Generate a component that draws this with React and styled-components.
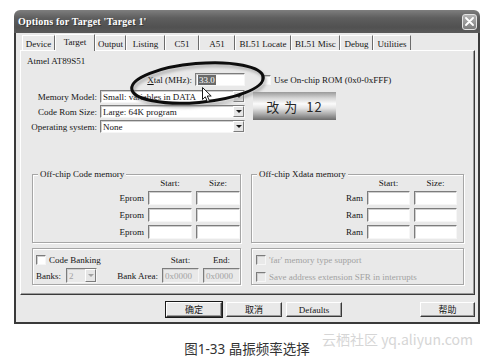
import React from "react";
import styled, { createGlobalStyle } from "styled-components";

const GlobalStyle = createGlobalStyle`
  *, *::before, *::after {
    box-sizing: border-box;
  }
  html, body {
    margin: 0;
    padding: 0;
    background: #ffffff;
  }
  body {
    font-family: "Liberation Serif", "Noto Sans CJK SC", serif;
    font-size: 9px;
    color: #141414;
  }
`;

const Page = styled.div`
  width: 494px;
  height: 362px;
  overflow: hidden;
  display: flex;
  flex-direction: column;
  background: #ffffff;
`;

const Window = styled.div`
  margin: 10px 0 0 14px;
  width: 466px;
  height: 314px;
  flex: none;
  display: flex;
  flex-direction: column;
`;

const TitleBar = styled.div`
  height: 23px;
  flex: none;
  display: flex;
  align-items: center;
  justify-content: space-between;
  padding: 0 3px 0 4px;
  border-radius: 6px 6px 0 0;
  background: linear-gradient(#7e7e7e, #5e5e5e 35%, #515151 75%, #5a5a5a);
  color: #ffffff;
`;

const Title = styled.span`
  font-weight: bold;
  font-size: 10px;
  letter-spacing: 0.2px;
  text-shadow: 1px 1px 0 rgba(0, 0, 0, 0.35);
`;

const CloseButton = styled.div`
  width: 15px;
  height: 16px;
  border: 1px solid #e2e2e2;
  border-radius: 3px;
  background: linear-gradient(#b4b4b4, #7c7c7c);
  display: flex;
  align-items: center;
  justify-content: center;
`;

const Frame = styled.div`
  flex: 1;
  display: flex;
  flex-direction: column;
  border: 2px solid #3a3a3a;
  border-top: none;
  background: #e9e9e9;
  padding: 2px 3px 0 4px;
`;

const TabRow = styled.div`
  height: 15px;
  flex: none;
  display: flex;
  align-items: flex-end;
  padding-left: 2px;
  position: relative;
  z-index: 1;
`;

const Tab = styled.div`
  width: ${(p) => p.$w}px;
  height: ${(p) => (p.$active ? 17 : 15)}px;
  margin-bottom: ${(p) => (p.$active ? -1 : 0)}px;
  padding: ${(p) => (p.$active ? "0 0 2px" : "1px 0 0")};
  display: flex;
  align-items: center;
  justify-content: center;
  white-space: nowrap;
  background: #e9e9e9;
  border-top: 1px solid #ffffff;
  border-left: 1px solid #ffffff;
  border-right: 1px solid #6c6c6c;
`;

const Panel = styled.div`
  position: relative;
  height: 245px;
  flex: none;
  display: flex;
  flex-direction: column;
  padding-left: 6px;
  border: 1px solid;
  border-color: #ffffff #3a3a3a #3a3a3a #ffffff;
  box-shadow: inset -1px -1px 0 #9c9c9c;
`;

const DeviceName = styled.div`
  margin-top: 5px;
  line-height: 11px;
`;

const Row = styled.div`
  height: 13px;
  display: flex;
  align-items: center;
  margin-top: ${(p) => p.$mt || 0}px;
`;

const FieldStack = styled.div`
  display: flex;
  flex-direction: column;
  gap: 2px;
  margin-top: 4px;
`;

const FieldLabel = styled.span`
  width: ${(p) => p.$w}px;
  flex: none;
  text-align: right;
  padding-right: 3px;
  white-space: nowrap;
`;

const sunken = `
  border: 1px solid;
  border-color: #7c7c7c #f6f6f6 #f6f6f6 #7c7c7c;
  box-shadow: inset 1px 1px 0 #cfcfcf;
`;

const TextBox = styled.div`
  width: ${(p) => (p.$w ? `${p.$w}px` : "auto")};
  height: ${(p) => p.$h || 14}px;
  display: flex;
  align-items: center;
  padding-left: 2px;
  white-space: nowrap;
  background: ${(p) => (p.$disabled ? "#e9e9e9" : "#ffffff")};
  color: ${(p) => (p.$disabled ? "#a2a2a2" : "#141414")};
  ${sunken}
`;

const Selected = styled.span`
  background: #6a6a6a;
  color: #ffffff;
  padding: 0 1px;
  line-height: 10px;
`;

const Select = styled.div`
  width: ${(p) => p.$w}px;
  height: ${(p) => p.$h || 13}px;
  display: flex;
  align-items: stretch;
  padding-left: 2px;
  background: ${(p) => (p.$disabled ? "#e9e9e9" : "#ffffff")};
  color: ${(p) => (p.$disabled ? "#a2a2a2" : "#141414")};
  ${sunken}
`;

const SelectText = styled.span`
  flex: 1;
  display: flex;
  align-items: center;
  overflow: hidden;
  white-space: nowrap;
`;

const DropButton = styled.span`
  width: 11px;
  flex: none;
  display: flex;
  align-items: center;
  justify-content: center;
  background: #e6e6e6;
  border: 1px solid;
  border-color: #ffffff #7c7c7c #7c7c7c #ffffff;
  &::after {
    content: "";
    border-left: 3px solid transparent;
    border-right: 3px solid transparent;
    border-top: 3px solid ${(p) => (p.$disabled ? "#a2a2a2" : "#1a1a1a")};
  }
`;

const CheckItem = styled.label`
  display: flex;
  align-items: center;
  gap: 3px;
  height: ${(p) => p.$h || 12}px;
  white-space: nowrap;
  margin-left: ${(p) => p.$ml || 0}px;
  color: ${(p) => (p.$disabled ? "#a2a2a2" : "#141414")};
`;

const Box = styled.span`
  width: 10px;
  height: 10px;
  flex: none;
  background: ${(p) => (p.$disabled ? "#e9e9e9" : "#ffffff")};
  ${sunken}
`;

const GroupGrid = styled.div`
  display: grid;
  grid-template-columns: 209px 213px;
  column-gap: 10px;
  margin-left: 5px;
  margin-top: ${(p) => p.$mt}px;
`;

const Group = styled.div`
  position: relative;
  height: ${(p) => p.$h}px;
  border: 1px solid #a6a6a6;
  box-shadow: inset 1px 1px 0 #ffffff, 1px 1px 0 #ffffff;
`;

const Legend = styled.span`
  position: absolute;
  top: -6px;
  left: 5px;
  padding: 0 2px;
  line-height: 11px;
  background: #e9e9e9;
`;

const MemoryGrid = styled.div`
  display: grid;
  grid-template-columns: 1fr ${(p) => p.$cw}px ${(p) => p.$cw}px;
  grid-template-rows: 9px repeat(3, 14px);
  column-gap: 4px;
  row-gap: 3px;
  padding: 4px ${(p) => p.$pr}px 0 0;
`;

const ColHead = styled.span`
  text-align: center;
  line-height: 9px;
  padding-left: ${(p) => p.$pl || 0}px;
`;

const RowLabel = styled.span`
  text-align: right;
  line-height: 14px;
`;

const BankGrid = styled.div`
  display: grid;
  grid-template-columns: 26px 31px 1fr 37px 37px;
  grid-template-rows: 11px 15px;
  column-gap: 4px;
  row-gap: 3px;
  align-items: center;
  padding: 5px 0 0 3px;
`;

const Span3 = styled.div`
  grid-column: 1 / 4;
`;

const Cell = styled.span`
  text-align: ${(p) => p.$align || "left"};
  white-space: nowrap;
`;

const OptionList = styled.div`
  display: flex;
  flex-direction: column;
  gap: 5px;
  padding: 5px 0 0 4px;
`;

const ButtonRow = styled.div`
  display: flex;
  gap: 4px;
  margin-top: 7px;
  padding: 0 0 0 146px;
`;

const Button = styled.div`
  width: ${(p) => p.$w}px;
  height: 15px;
  margin-left: ${(p) => (p.$push ? "auto" : "0")};
  display: flex;
  align-items: center;
  justify-content: center;
  font-family: ${(p) =>
    p.$cjk ? '"Noto Sans CJK SC", sans-serif' : '"Liberation Serif", serif'};
  font-size: ${(p) => (p.$cjk ? 9 : 9)}px;
  background: #e9e9e9;
  border: 1px solid;
  border-color: #ffffff #3a3a3a #3a3a3a #ffffff;
  box-shadow: inset -1px -1px 0 #9c9c9c
    ${(p) => (p.$primary ? ", 0 0 0 1px #1a1a1a" : "")};
`;

const Ellipse = styled.svg`
  position: absolute;
  left: 104px;
  top: 7px;
  overflow: visible;
  pointer-events: none;
`;

const Cursor = styled.svg`
  position: absolute;
  left: 181px;
  top: 36px;
`;

const Callout = styled.div`
  position: absolute;
  left: 232px;
  top: 41px;
  width: 83px;
  height: 28px;
  display: flex;
  align-items: center;
  justify-content: center;
  gap: 8px;
  font-family: "Noto Sans CJK SC", "Noto Sans", sans-serif;
  font-size: 13px;
  color: #262626;
  letter-spacing: 1px;
  background: linear-gradient(
    #9a9a9a 0%,
    #d6d6d6 22%,
    #fbfbfb 42%,
    #e4e4e4 58%,
    #a8a8a8 80%,
    #6c6c6c 100%
  );
`;

const Footer = styled.div`
  position: relative;
  flex: 1;
`;

const Caption = styled.div`
  padding-top: 17px;
  text-align: center;
  font-family: "Noto Sans", "Noto Sans CJK SC", sans-serif;
  font-size: 13.5px;
  line-height: 16px;
  color: #333333;
`;

const Watermark = styled.div`
  position: absolute;
  left: 322px;
  top: 7px;
  font-family: "Noto Sans CJK SC", "Noto Sans", sans-serif;
  font-size: 14px;
  line-height: 16px;
  color: #d6d6d6;
  white-space: nowrap;
`;

const tabs = [
  { label: "Device", w: 33 },
  { label: "Target", w: 40, active: true },
  { label: "Output", w: 31 },
  { label: "Listing", w: 39 },
  { label: "C51", w: 34 },
  { label: "A51", w: 36 },
  { label: "BL51 Locate", w: 56 },
  { label: "BL51 Misc", w: 49 },
  { label: "Debug", w: 33 },
  { label: "Utilities", w: 38 },
];

const fields = [
  { label: "Memory Model:", value: "Small: variables in DATA" },
  { label: "Code Rom Size:", value: "Large: 64K program" },
  { label: "Operating system:", value: "None" },
];

function MemoryGroup({ title, label, cw, pr, sizePad }) {
  return (
    <Group $h={69}>
      <Legend>{title}</Legend>
      <MemoryGrid $cw={cw} $pr={pr}>
        <span />
        <ColHead>Start:</ColHead>
        <ColHead $pl={sizePad}>Size:</ColHead>
        {[0, 1, 2].map((i) => (
          <React.Fragment key={i}>
            <RowLabel>{label}</RowLabel>
            <TextBox />
            <TextBox />
          </React.Fragment>
        ))}
      </MemoryGrid>
    </Group>
  );
}

export default function App() {
  return (
    <Page>
      <GlobalStyle />
      <Window>
        <TitleBar>
          <Title>Options for Target 'Target 1'</Title>
          <CloseButton>
            <svg width="9" height="9" viewBox="0 0 9 9">
              <path
                d="M1 1 L8 8 M8 1 L1 8"
                stroke="#ffffff"
                strokeWidth="1.8"
                strokeLinecap="round"
              />
            </svg>
          </CloseButton>
        </TitleBar>
        <Frame>
          <TabRow>
            {tabs.map((t) => (
              <Tab key={t.label} $w={t.w} $active={t.active}>
                {t.label}
              </Tab>
            ))}
          </TabRow>
          <Panel>
            <DeviceName>Atmel AT89S51</DeviceName>
            <Row $mt={6}>
              <FieldLabel $w={168}>
                <u>X</u>tal (MHz):
              </FieldLabel>
              <TextBox $w={50} $h={13}>
                <Selected>33.0</Selected>
              </TextBox>
              <CheckItem $ml={16}>
                <Box />
                Use On-chip ROM (0x0-0xFFF)
              </CheckItem>
            </Row>
            <FieldStack>
              {fields.map((f) => (
                <Row key={f.label}>
                  <FieldLabel $w={73}>{f.label}</FieldLabel>
                  <Select $w={145}>
                    <SelectText>{f.value}</SelectText>
                    <DropButton />
                  </Select>
                </Row>
              ))}
            </FieldStack>

            <GroupGrid $mt={41}>
              <MemoryGroup
                title="Off-chip Code memory"
                label="Eprom"
                cw={44}
                pr={0}
                sizePad={-14}
              />
              <MemoryGroup
                title="Off-chip Xdata memory"
                label="Ram"
                cw={43}
                pr={6}
                sizePad={0}
              />
            </GroupGrid>

            <GroupGrid $mt={5}>
              <Group $h={37}>
                <BankGrid>
                  <Span3>
                    <CheckItem $h={11}>
                      <Box />
                      Code Banking
                    </CheckItem>
                  </Span3>
                  <Cell $align="center">Start:</Cell>
                  <Cell $align="center">End:</Cell>
                  <Cell>Banks:</Cell>
                  <Select $w={31} $h={15} $disabled>
                    <SelectText>2</SelectText>
                    <DropButton $disabled />
                  </Select>
                  <Cell $align="right">Bank Area:</Cell>
                  <TextBox $h={15} $disabled>
                    0x0000
                  </TextBox>
                  <TextBox $h={15} $disabled>
                    0x0000
                  </TextBox>
                </BankGrid>
              </Group>
              <Group $h={37}>
                <OptionList>
                  <CheckItem $disabled>
                    <Box $disabled />
                    'far' memory type support
                  </CheckItem>
                  <CheckItem $disabled>
                    <Box $disabled />
                    Save address extension SFR in interrupts
                  </CheckItem>
                </OptionList>
              </Group>
            </GroupGrid>

            <Ellipse width="146" height="51" viewBox="0 0 146 51">
              <defs>
                <filter id="soft" x="-20%" y="-40%" width="140%" height="180%">
                  <feGaussianBlur stdDeviation="1.6" />
                </filter>
              </defs>
              <g transform="rotate(-5 72.5 25)">
                <ellipse
                  cx="74"
                  cy="28"
                  rx="66"
                  ry="19.5"
                  fill="none"
                  stroke="#8a8a8a"
                  strokeWidth="3"
                  opacity="0.6"
                  filter="url(#soft)"
                />
                <ellipse
                  cx="72.5"
                  cy="25"
                  rx="66"
                  ry="19.5"
                  fill="none"
                  stroke="#0d0d0d"
                  strokeWidth="3"
                />
              </g>
            </Ellipse>

            <Cursor width="12" height="16" viewBox="0 0 12 16">
              <path
                d="M0.5 0.5 L0.5 12.5 L3.3 9.8 L5.4 14.6 L7.4 13.7 L5.3 9 L9.2 9 Z"
                fill="#ffffff"
                stroke="#1a1a1a"
                strokeWidth="1"
                strokeLinejoin="round"
              />
            </Cursor>

            <Callout>
              <span>改 为</span>
              <span>12</span>
            </Callout>
          </Panel>
          <ButtonRow>
            <Button $w={56} $cjk $primary>
              确定
            </Button>
            <Button $w={56} $cjk>
              取消
            </Button>
            <Button $w={56}>Defaults</Button>
            <Button $w={55} $cjk $push>
              帮助
            </Button>
          </ButtonRow>
        </Frame>
      </Window>
      <Footer>
        <Caption>图1-33 晶振频率选择</Caption>
        <Watermark>云栖社区 yq.aliyun.com</Watermark>
      </Footer>
    </Page>
  );
}
